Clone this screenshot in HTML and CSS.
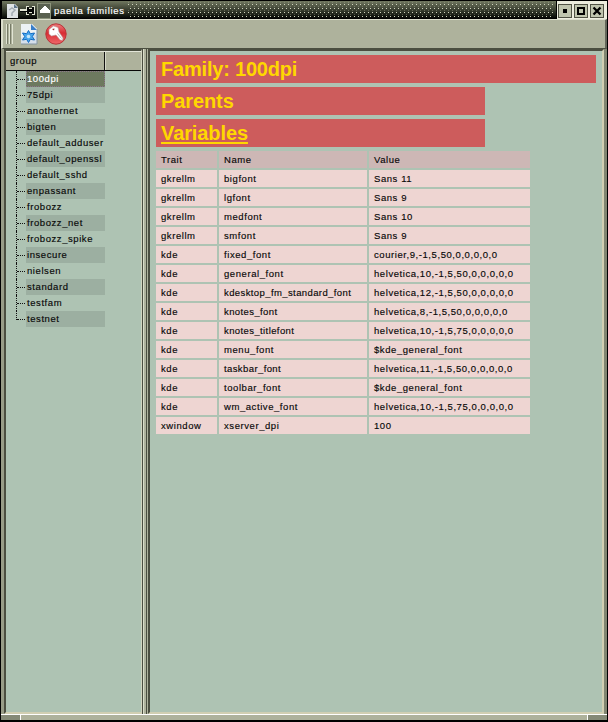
FILE: index.html
```html
<!DOCTYPE html>
<html lang="en">
<head>
<meta charset="utf-8">
<title>paella families</title>
<link rel="stylesheet" href="styles.css">
</head>
<body>
<div class="window">
  <header class="titlebar">
    <svg class="tb-icons" width="50" height="18" viewBox="0 0 50 18">
      <path d="M5 3h8l3 3v11H5z" fill="#dfe3e6"/><path d="M12 3v4h4z" fill="#5d7389"/><path d="M7 9l3-2 3 2-3 3v3" fill="none" stroke="#a5adb5" stroke-width="1.500"/>
      <g shape-rendering="crispEdges"><path d="M18 8h7v2h-7zM24 5h3v2h3V5h3v9h-3v-2h-3v2h-3z" fill="#e4e6d5"/><path d="M18 10h7v1h-7zM25 6h2v2h3V6h2v7h-2v-2h-3v2h-2z" fill="#050605"/>
      <path d="M35 2h14v16H35z" fill="#8d947c"/><path d="M36 3h12v14H36z" fill="#59604f"/><path d="M38 9h10v3H38zM39 8h8v1h-8zM40 7h6v1h-6zM41 6h4v1h-4zM42 5h2v1h-2z" fill="#fff"/></g>
    </svg>
    <h1 class="title">paella families</h1>
    <svg class="dots" height="18"><defs><pattern id="dot" width="4" height="8" patternUnits="userSpaceOnUse"><path d="M0 3h1v1H0zM2 7h1v1H2z" fill="#d0d4bd"/><path d="M2 5h1v1H2zM0 1h1v1H0z" fill="#aeb29c" opacity=".35"/></pattern></defs><rect width="100%" height="17" fill="url(#dot)"/></svg>
    <div class="controls">
      <span class="ctl"><svg width="14" height="14" viewBox="0 0 14 14"><path d="M5 5h4v4H5z"/></svg></span>
      <span class="ctl"><svg width="14" height="14" viewBox="0 0 14 14"><path d="M4 4h6v6H4z" fill="none" stroke="#000" stroke-width="2"/></svg></span>
      <span class="ctl"><svg width="14" height="14" viewBox="0 0 14 14"><path d="M3.500 3.500l7 7m0-7l-7 7" fill="none" stroke="#000" stroke-width="2.300"/></svg></span>
    </div>
  </header>
  <div class="toolbar">
    <div class="grip"></div>
    <svg width="20" height="22" viewBox="0 0 20 22">
      <path d="M2 1h11l5 5v15H2z" fill="#d5dfeb"/><path d="M2 1h11l5 5v4L2 15z" fill="#edf2f5"/><path d="M12 1v6h6z" fill="#377dc8"/><path d="M2 21h16V6" fill="none" stroke="#8294a1"/>
      <path d="M9.500 7.500l1.800 3.200 4.200-.7-2.200 3.500 2.200 3.500-4.200-.7-1.800 3.200-1.800-3.200-4.200.7 2.200-3.500-2.200-3.500 4.200.7z" fill="#4aa6ec" stroke="#126cc4"/><circle cx="9.500" cy="13.500" r="1.800" fill="#c4e6fa"/>
    </svg>
    <svg class="key" width="22" height="22" viewBox="0 0 22 22">
      <defs><linearGradient id="red" x2="0" y2="1"><stop stop-color="#ee8080"/><stop offset=".45" stop-color="#d82c33"/><stop offset="1" stop-color="#f0696b"/></linearGradient></defs>
      <circle cx="11" cy="11" r="10.200" fill="url(#red)" stroke="#b93237"/>
      <path d="M4 6.500L8.500 3l4.500 1.500 1 4.500 4 6-.5 2.300-2.300-.3-4.200-5-4.500 1-2.500-2z" fill="#fff" stroke="#b8a0a0" stroke-width=".6"/><path d="M12.500 10.500l4 5" stroke="#b9b9b9"/><path d="M7 6l2.500-.5L9 7.500z" fill="#9b2529"/>
    </svg>
  </div>
  <main class="panes">
    <nav class="tree">
      <div class="tree-head"><span>group</span><i></i></div>
      <ul>
        <li class="selected"><span>100dpi</span></li><li><span>75dpi</span></li><li><span>anothernet</span></li><li><span>bigten</span></li>
        <li><span>default_adduser</span></li><li><span>default_openssl</span></li><li><span>default_sshd</span></li><li><span>enpassant</span></li>
        <li><span>frobozz</span></li><li><span>frobozz_net</span></li><li><span>frobozz_spike</span></li><li><span>insecure</span></li>
        <li><span>nielsen</span></li><li><span>standard</span></li><li><span>testfam</span></li><li><span>testnet</span></li>
      </ul>
    </nav>
    <div class="splitter"></div>
    <article class="content">
      <h2 class="family">Family: 100dpi</h2>
      <h2>Parents</h2>
      <h2><u>Variables</u></h2>
      <table>
        <colgroup><col class="trait"><col class="name"><col class="value"></colgroup>
        <thead><tr><th>Trait</th><th>Name</th><th>Value</th></tr></thead>
        <tbody>
          <tr><td>gkrellm</td><td>bigfont</td><td>Sans 11</td></tr>
          <tr><td>gkrellm</td><td>lgfont</td><td>Sans 9</td></tr>
          <tr><td>gkrellm</td><td>medfont</td><td>Sans 10</td></tr>
          <tr><td>gkrellm</td><td>smfont</td><td>Sans 9</td></tr>
          <tr><td>kde</td><td>fixed_font</td><td>courier,9,-1,5,50,0,0,0,0,0</td></tr>
          <tr><td>kde</td><td>general_font</td><td>helvetica,10,-1,5,50,0,0,0,0,0</td></tr>
          <tr><td>kde</td><td class="tight">kdesktop_fm_standard_font</td><td>helvetica,12,-1,5,50,0,0,0,0,0</td></tr>
          <tr><td>kde</td><td class="tight">knotes_font</td><td>helvetica,8,-1,5,50,0,0,0,0,0</td></tr>
          <tr><td>kde</td><td class="tight">knotes_titlefont</td><td>helvetica,10,-1,5,75,0,0,0,0,0</td></tr>
          <tr><td>kde</td><td>menu_font</td><td>$kde_general_font</td></tr>
          <tr><td>kde</td><td class="tight">taskbar_font</td><td>helvetica,11,-1,5,50,0,0,0,0,0</td></tr>
          <tr><td>kde</td><td>toolbar_font</td><td>$kde_general_font</td></tr>
          <tr><td>kde</td><td>wm_active_font</td><td>helvetica,10,-1,5,75,0,0,0,0,0</td></tr>
          <tr><td>xwindow</td><td>xserver_dpi</td><td>100</td></tr>
        </tbody>
      </table>
    </article>
  </main>
  <footer class="resize"><i></i><b></b><i></i></footer>
</div>
</body>
</html>
```
FILE: styles.css
```css
* { box-sizing: border-box; }
body { margin: 0; background: #000; color: #080808; font: 9.5px/16px "Liberation Sans", Arial, sans-serif; letter-spacing: .57px; -webkit-text-stroke: .15px; }
.window { width: 608px; height: 722px; display: flex; flex-direction: column; border: 1px solid #000; border-bottom-width: 2px; background: #aeb29c; }
.titlebar { height: 18px; display: flex; background: linear-gradient(#70775f, #171b13 80%, #000); color: #fff; border-left: 1px solid #000; flex: none; }
.tb-icons { flex: none; }
.title { margin: 1px 3px 0 2px; font-size: 9.5px; line-height: 17px; font-weight: normal; letter-spacing: .7px; white-space: nowrap; }
.dots { flex: 1; min-width: 0; margin-right: 2px; }
.controls { display: flex; gap: 2px; padding: 3px 3px 0 1px; background: #ededde; border-left: 1px solid #000; }
.ctl { width: 14px; height: 14px; background: #c0c5ae; border: 1px solid #515345; }
.ctl svg { display: block; margin: -1px; }
.toolbar { height: 30px; flex: none; display: flex; align-items: center; border: 1px solid #dcdecd; border-width: 1px 2px; border-right-color: #63665a; border-bottom-color: #4b4e40; padding-left: 3px; }
.grip { width: 7px; height: 20px; background: repeating-linear-gradient(90deg, #e1e4d4 0 1px, #777b68 1px 2px, #aeb29c 2px 3px); margin-right: 6px; }
.key { margin-left: 6px; }
.panes { flex: 1; min-height: 0; display: flex; border-left: 3px solid #989c87; border-right: 3px solid #818571; }
.tree { width: 138px; flex: none; border: 2px solid #4b4e40; border-right: 1px solid #d1d4bf; border-bottom-color: #d1cfb2; background: #aec3b3; }
.tree-head { height: 20px; display: flex; line-height: 18px; background: #aeb29c; border-top: 1px solid #e3e5d8; border-bottom: 1px solid #080808; }
.tree-head span { width: 99px; padding-left: 4px; border-right: 1px solid #111; }
.tree-head i { flex: 1; border-left: 1px solid #d6d9c8; }
ul { list-style: none; margin: 0; padding: 0 0 0 10px; }
li { position: relative; display: flex; height: 16px; padding-left: 10px; }
li::before { content: ""; position: absolute; left: 0; top: 0; height: 100%; border-left: 1px dotted #111; }
li:last-child::before { height: 9px; }
li::after { content: ""; position: absolute; left: 1px; top: 8px; width: 8px; border-top: 1px dotted #111; }
li span { width: 79px; padding-left: 1px; white-space: nowrap; }
li:nth-child(even) span { background: #9cafa1; }
li.selected span { background: #6d795f; color: #fff; outline: 1px dotted #8b748b; outline-offset: -1px; }
.splitter { width: 6px; flex: none; background: linear-gradient(90deg, #4b4e40 0 1px, #d9dcc9 1px 2px, #aeb29c 2px 4px, #4b4e40 4px 5px, #aeb29c 5px); }
.content { flex: 1; min-width: 0; background: #aec3b3; border: 2px solid #4b4e40; border-right-color: #d1cfb2; border-bottom-color: #d1cfb2; padding: 4px 6px 0; }
h2 { margin: 0 0 4px; width: 329px; height: 28px; padding-left: 5px; background: #cd5c5c; color: #ffd700; font-size: 20px; line-height: 28px; letter-spacing: -.1px; -webkit-text-stroke: 0; }
h2.family { width: 440px; letter-spacing: -.2px; }
u { text-decoration-thickness: 2px; text-underline-offset: 2px; text-decoration-skip-ink: none; }
table { table-layout: fixed; width: 378px; margin: -2px 0 0 -2px; border-spacing: 2px; }
.trait { width: 61px; }
.name { width: 148px; }
.value { width: 161px; }
th, td { height: 17px; padding: 0 5px; background: #eed5d2; text-align: left; font-weight: normal; line-height: 17px; white-space: nowrap; }
th { background: #cdb7b5; }
.tight { letter-spacing: .4px; }
.resize { height: 6px; flex: none; display: flex; border-top: 1px solid #fff; }
.resize i { width: 19px; background: #858a77; }
.resize b { flex: 1; border-left: 1px solid #fff; border-right: 1px solid #fff; background: #aeb29c; }
```
